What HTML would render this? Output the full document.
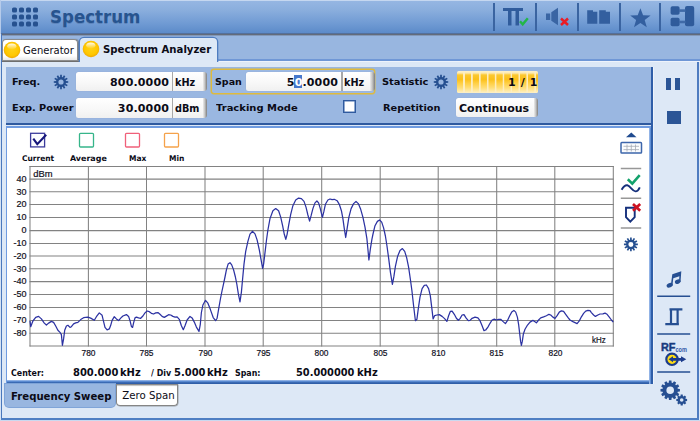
<!DOCTYPE html>
<html><head><meta charset="utf-8"><title>Spectrum</title>
<style>
html,body{margin:0;padding:0;}
body{width:700px;height:421px;overflow:hidden;position:relative;background:#98b6e0;font-family:"DejaVu Sans","Liberation Sans",sans-serif;}
.abs,#root div,#root span,#root svg{position:absolute;}
#root{position:absolute;left:0;top:0;width:700px;height:421px;overflow:hidden;}
.b{font-weight:bold;color:#0b0b16;white-space:nowrap;line-height:1;}
.r{font-weight:normal;color:#0b0b16;white-space:nowrap;line-height:1;}
.ax{font-family:"Liberation Sans",sans-serif;font-size:9px;color:#10101c;white-space:nowrap;line-height:1;-webkit-text-stroke:.2px #10101c;}
.inp{background:linear-gradient(#ffffff,#f8f8f8 55%,#f0f0f0);border-radius:2.5px;box-shadow:0 0 0 .6px rgba(150,175,215,.6);}
.cap{background:linear-gradient(90deg,#ececec,#c4c4c4 45%,#7e7e7e);border-radius:0 3px 3px 0;}
</style></head><body><div id="root">

<!-- header -->
<div style="left:0;top:0;width:700px;height:34px;background:linear-gradient(#97b7e3 0%,#8aaedd 30%,#6f9ad3 70%,#5a89c8 100%);"></div>
<div style="left:0;top:0;width:700px;height:1px;background:#c5d7f0;"></div>
<div style="left:0;top:33px;width:700px;height:1px;background:#54709c;"></div>
<div style="left:0;top:34px;width:700px;height:1px;background:#636b7a;"></div>
<div style="left:0;top:35px;width:700px;height:1px;background:#8398b8;"></div>
<div style="left:0;top:0;width:1px;height:34px;background:#b6cbea;"></div>
<!-- grid icon -->
<svg style="left:11px;top:6px" width="30" height="22" viewBox="0 0 30 22">
<g fill="#26518f">
<rect x="1" y="1.5" width="5" height="5" rx="1.600"/><rect x="8" y="1.5" width="5" height="5" rx="1.600"/><rect x="15" y="1.5" width="5" height="5" rx="1.600"/><rect x="22" y="1.5" width="5" height="5" rx="1.600"/>
<rect x="1" y="8.5" width="5" height="5" rx="1.600"/><rect x="8" y="8.5" width="5" height="5" rx="1.600"/><rect x="15" y="8.5" width="5" height="5" rx="1.600"/><rect x="22" y="8.5" width="5" height="5" rx="1.600"/>
<rect x="1" y="15.5" width="5" height="5" rx="1.600"/><rect x="8" y="15.5" width="5" height="5" rx="1.600"/><rect x="15" y="15.5" width="5" height="5" rx="1.600"/><rect x="22" y="15.5" width="5" height="5" rx="1.600"/>
</g></svg>
<span id="title" class="b" style="left:50px;top:7.5px;font-size:18px;color:#27548f;transform:scaleX(.925);transform-origin:0 0;text-shadow:0 1px 0 rgba(40,70,120,.25);">Spectrum</span>

<!-- top-right toolbar -->
<div style="left:493px;top:2.5px;width:2px;height:28px;background:#3a64a1;"></div>
<div style="left:535px;top:2.5px;width:2px;height:28px;background:#3a64a1;"></div>
<div style="left:577px;top:2.5px;width:2px;height:28px;background:#3a64a1;"></div>
<div style="left:619px;top:2.5px;width:2px;height:28px;background:#3a64a1;"></div>
<div style="left:659px;top:2.5px;width:2px;height:28px;background:#3a64a1;"></div>
<svg id="tb" style="left:496px;top:0" width="204" height="34" viewBox="496 0 204 34">
<!-- TT check -->
<g fill="#305c9c"><rect x="503" y="8" width="20" height="3"/><rect x="508" y="8" width="3.500" height="17.500"/><rect x="515.500" y="8" width="3.500" height="17.500"/></g>
<path d="M520 21.300 L522.700 24.300 L527.800 18.200" stroke="#22b648" stroke-width="2.400" fill="none"/>
<!-- speaker x -->
<g fill="#3a65a3"><rect x="546" y="13.500" width="4.200" height="6.500"/><path d="M551.300 12.300 L558 7.800 L558 25.200 L551.300 20.700 Z"/></g>
<path d="M561 18.500 L568 25 M568 18.500 L561 25" stroke="#ea1c24" stroke-width="2.500" fill="none"/>
<!-- folders -->
<g fill="#335f9f"><path d="M587.200 10.300 L593 10.300 L593 11.700 L597.300 11.700 L597.300 23.700 L587.200 23.700 Z"/><path d="M599.200 10.300 L605.800 10.300 L605.800 11.700 L610 11.700 L610 23.700 L599.200 23.700 Z"/></g>
<!-- star -->
<path fill="#335f9f" d="M640.400 8.200 L643.100 15.200 L650.600 15.500 L644.700 20.100 L646.800 27.300 L640.400 23.100 L634 27.300 L636.100 20.100 L630.200 15.500 L637.700 15.200 Z"/>
<!-- blocks -->
<g fill="#2f5b9b"><rect x="670.600" y="6.300" width="9" height="8.400" rx="1.800"/><rect x="670.600" y="17.800" width="9" height="8.400" rx="1.800"/><rect x="685" y="6" width="9.200" height="20.300" rx="2"/></g>
<g fill="#3f6aa8"><rect x="679" y="9.300" width="6.500" height="2.600"/><rect x="679" y="20.700" width="6.500" height="2.600"/></g>
</svg>

<!-- tab strip -->
<div style="left:0;top:36px;width:700px;height:26px;background:#98b6e0;"></div>
<!-- main panel light -->
<div style="left:0;top:61px;width:700px;height:360px;background:#dde8f6;"></div>
<div style="left:0;top:59.400px;width:700px;height:1.800px;background:#6f97d6;"></div><div style="left:0;top:61.100px;width:700px;height:1.300px;background:#eef3fb;"></div>
<div style="left:1px;top:34px;width:1px;height:386px;background:#4a78bc;"></div><div style="left:0;top:34px;width:1px;height:387px;background:#d5e2f4;"></div>
<div style="left:697.200px;top:62px;width:1.800px;height:358px;background:#4f7cc0;"></div>
<div style="left:1px;top:418px;width:698px;height:2px;background:#4f7fc3;"></div>
<div style="left:0;top:420px;width:700px;height:1px;background:#c9d9f0;"></div>

<!-- tab Generator -->
<div style="left:2px;top:39px;width:76px;height:22px;background:linear-gradient(#ffffff,#ffffff 75%,#e4e4e4);border-radius:4px 4px 0 0;border:1px solid #8c8c8c;border-bottom:none;box-sizing:border-box;box-shadow:1px 0 1px rgba(60,60,60,.5);"></div>
<div style="left:2px;top:60px;width:77px;height:1px;background:#8e8e8e;"></div><div style="left:2px;top:61px;width:77px;height:1px;background:#6e6e6e;"></div>
<svg style="left:2.6px;top:41px" width="18" height="18" viewBox="0 0 18 18"><defs><radialGradient id="bg1" cx="50%" cy="45%" r="55%"><stop offset="0" stop-color="#ffd21a"/><stop offset=".7" stop-color="#ffc800"/><stop offset=".9" stop-color="#f6b400"/><stop offset="1" stop-color="#e39a00"/></radialGradient><linearGradient id="hl1" x1="0" y1="0" x2="0" y2="1"><stop offset="0" stop-color="#fff" stop-opacity=".95"/><stop offset="1" stop-color="#fff" stop-opacity=".05"/></linearGradient></defs><circle cx="9" cy="9" r="8.3" fill="url(#bg1)"/><ellipse cx="8.800" cy="5.300" rx="4.600" ry="2.900" fill="url(#hl1)"/></svg>
<span id="tgen" class="r" style="left:23px;top:46px;font-size:10px;">Generator</span>
<!-- tab Spectrum Analyzer -->
<div style="left:80px;top:38px;width:137px;height:26px;background:#dde8f6;border-radius:4px 4px 0 0;box-shadow:0 0 0 1.3px #4f7dc0;"></div>
<div style="left:78px;top:62.400px;width:142px;height:4px;background:#dde8f6;"></div>
<svg style="left:81.6px;top:40px" width="18" height="18" viewBox="0 0 18 18"><defs><radialGradient id="bg2" cx="50%" cy="45%" r="55%"><stop offset="0" stop-color="#ffd21a"/><stop offset=".7" stop-color="#ffc800"/><stop offset=".9" stop-color="#f6b400"/><stop offset="1" stop-color="#e39a00"/></radialGradient><linearGradient id="hl2" x1="0" y1="0" x2="0" y2="1"><stop offset="0" stop-color="#fff" stop-opacity=".95"/><stop offset="1" stop-color="#fff" stop-opacity=".05"/></linearGradient></defs><circle cx="9" cy="9" r="8.3" fill="url(#bg2)"/><ellipse cx="8.800" cy="5.300" rx="4.600" ry="2.900" fill="url(#hl2)"/></svg>
<span id="tsa" class="b" style="left:103px;top:45px;font-size:10.15px;">Spectrum Analyzer</span>

<!-- form area -->
<div style="left:5.7px;top:66.7px;width:647.1px;height:57.9px;background:#2f5a9f;"></div>
<div style="left:5.700px;top:66.700px;width:645.400px;height:56.500px;background:#9ab7e1;"></div>
<div style="left:652.900px;top:66.700px;width:1.100px;height:317px;background:#eef3fb;"></div>
<span id="lfreq" class="b" style="left:12px;top:76.8px;font-size:9.5px;transform:scaleX(1.03);transform-origin:0 0;">Freq.</span>
<span id="lexp" class="b" style="left:12px;top:102.8px;font-size:9.5px;transform:scaleX(1.03);transform-origin:0 0;">Exp. Power</span>
<svg class="gear" style="left:53px;top:74px" width="16" height="16" viewBox="-8 -8 16 16"><use href="#gear"/></svg>
<!-- freq input -->
<div class="inp" style="left:76.3px;top:71.6px;width:126.5px;height:19.6px;border-radius:2.5px 0 0 2.5px;"></div><div style="left:172.1px;top:71.6px;width:1.2px;height:19.6px;background:#a8a8a8;"></div><div class="cap" style="left:202.79999999999998px;top:71.6px;width:4.6px;height:19.6px;"></div>
<span id="vfreq" class="b" style="right:531px;top:76.7px;font-size:11px;letter-spacing:.15px;">800.0000</span>
<span id="ufreq" class="b" style="left:175px;top:77.7px;font-size:9.7px;">kHz</span>
<!-- exp power input -->
<div class="inp" style="left:76.3px;top:98.0px;width:126.5px;height:19.6px;border-radius:2.5px 0 0 2.5px;"></div><div style="left:172.1px;top:98.0px;width:1.2px;height:19.6px;background:#a8a8a8;"></div><div class="cap" style="left:202.79999999999998px;top:98.0px;width:4.6px;height:19.6px;"></div>
<span id="vexp" class="b" style="right:531px;top:102.7px;font-size:11px;letter-spacing:.15px;">30.0000</span>
<span id="uexp" class="b" style="left:175px;top:103.7px;font-size:9.7px;">dBm</span>
<!-- span -->
<div style="left:211.200px;top:69.400px;width:162.200px;height:22.200px;border:1px solid #dfba3c;box-shadow:0 0 0 .45px #dfba3c;border-radius:3px;background:#9cb9e2;"></div>
<span id="lspan" class="b" style="left:215px;top:76.8px;font-size:9.5px;transform:scaleX(1.0);transform-origin:0 0;">Span</span>
<div class="inp" style="left:245.5px;top:71.9px;width:124.5px;height:19.6px;border-radius:2.5px 0 0 2.5px;"></div><div style="left:341.4px;top:71.9px;width:1.2px;height:19.6px;background:#a8a8a8;"></div><div class="cap" style="left:370.0px;top:71.9px;width:4.6px;height:19.6px;"></div>
<div style="left:294px;top:75.200px;width:8px;height:13px;background:#4678cc;"></div>
<span id="vspan" class="b" style="right:362px;top:76.7px;font-size:11px;letter-spacing:.15px;">5<span style="position:static;color:#fff">0</span>.0000</span>
<span id="uspan" class="b" style="left:344px;top:77.7px;font-size:9.7px;">kHz</span>
<span id="ltrack" class="b" style="left:216px;top:102.8px;font-size:9.5px;transform:scaleX(1.05);transform-origin:0 0;">Tracking Mode</span>
<div style="left:343px;top:100.400px;width:11px;height:10.700px;border:1px solid #2f5a9f;background:#fff;box-shadow:inset 0 0 0 .6px #4a72b0;"></div>
<!-- statistic -->
<span id="lstat" class="b" style="left:382px;top:76.8px;font-size:9.5px;transform:scaleX(1.04);transform-origin:0 0;">Statistic</span>
<svg class="gear" style="left:433px;top:74px" width="16" height="16" viewBox="-8 -8 16 16"><use href="#gear"/></svg>
<div id="prog" style="left:457px;top:70.800px;width:80.500px;height:22.200px;border-radius:1.500px;background:
 repeating-linear-gradient(90deg,rgba(253,238,196,0) 0,rgba(253,238,196,0) 5.700px,rgba(253,238,196,.95) 6.300px,rgba(253,238,196,.95) 7.500px,rgba(253,238,196,0) 7.930px),
 linear-gradient(#fdf2cc 0%,#fdeab0 9%,#fbc830 18%,#fbc01a 38%,#ffcf44 55%,#ffdd74 75%,#ffe9a4 90%,#fdf0c8 100%);"></div>
<span id="vstat" class="b" style="left:508px;top:76.700px;font-size:11px;word-spacing:1px;letter-spacing:.100px;">1 / 1</span>
<span id="lrep" class="b" style="left:382.5px;top:102.8px;font-size:9.5px;transform:scaleX(1.03);transform-origin:0 0;">Repetition</span>
<div class="inp" style="left:455.6px;top:98px;width:78px;height:19px;border-radius:2.5px 0 0 2.5px;"></div><div class="cap" style="left:533.6px;top:98px;width:4.6px;height:19px;"></div>
<span id="vrep" class="b" style="left:459px;top:102.5px;font-size:11px;">Continuous</span>

<!-- chart panel -->
<div style="left:5.7px;top:126px;width:647.3px;height:257.7px;background:#6f9be0;"></div>
<div style="left:7px;top:380px;width:646px;height:3.7px;background:linear-gradient(#a9c4ee,#5d8dd4 35%,#2f5ea8 72%,#2f5ea8);border-radius:0 0 3px 0;"></div>
<div style="left:649.400px;top:127.700px;width:3.600px;height:256px;background:linear-gradient(90deg,#a9c4ee,#5d8dd4 40%,#2f5ea8 55%,#2f5ea8);"></div><div style="left:650.900px;top:66.700px;width:2px;height:62px;background:#2f5ea8;"></div>
<div style="left:7px;top:127.7px;width:642.4px;height:252.3px;background:#fff;"></div>

<!-- legend -->
<svg style="left:0;top:0" width="700" height="421" viewBox="0 0 700 421">
<defs>
<g id="gear"><path fill="#254f90" fill-rule="evenodd" d="M4.92 -0.90 L7.25 -0.85 L7.25 0.85 L4.92 0.90 L4.71 1.68 L6.71 2.89 L5.85 4.36 L3.81 3.24 L3.24 3.81 L4.36 5.85 L2.89 6.71 L1.68 4.71 L0.90 4.92 L0.85 7.25 L-0.85 7.25 L-0.90 4.92 L-1.68 4.71 L-2.89 6.71 L-4.36 5.85 L-3.24 3.81 L-3.81 3.24 L-5.85 4.36 L-6.71 2.89 L-4.71 1.68 L-4.92 0.90 L-7.25 0.85 L-7.25 -0.85 L-4.92 -0.90 L-4.71 -1.68 L-6.71 -2.89 L-5.85 -4.36 L-3.81 -3.24 L-3.24 -3.81 L-4.36 -5.85 L-2.89 -6.71 L-1.68 -4.71 L-0.90 -4.92 L-0.85 -7.25 L0.85 -7.25 L0.90 -4.92 L1.68 -4.71 L2.89 -6.71 L4.36 -5.85 L3.24 -3.81 L3.81 -3.24 L5.85 -4.36 L6.71 -2.89 L4.71 -1.68 Z M2.60 0.00 A2.6 2.6 0 1 0 -2.60 0.00 A2.6 2.6 0 1 0 2.60 0.00 Z"/></g>
</defs>
<rect x="30.600" y="133.300" width="14" height="13.600" fill="#fbfcff" stroke="#3b3b9c" stroke-width="1.300"/>
<path d="M33.300 138.600 L37.300 144.200 L46.200 134.800" stroke="#15157a" stroke-width="2.100" fill="none"/>
<rect x="79.500" y="133.300" width="14" height="13.700" fill="#fff" stroke="#36b58a" stroke-width="1.3" rx="1"/>
<rect x="125.500" y="133.300" width="14" height="13.700" fill="#fff" stroke="#f0607a" stroke-width="1.3" rx="1"/>
<rect x="164.500" y="133.300" width="14" height="13.700" fill="#fff" stroke="#f5a24a" stroke-width="1.3" rx="1"/>
<!-- grid -->
<g stroke="#828282" stroke-width="1.050">
<path d="M29.5 166.5H613.8"/>
<path d="M29.5 179.1H613.8"/>
<path d="M29.5 191.7H613.8"/>
<path d="M29.5 204.5H613.8"/>
<path d="M29.5 217.5H613.8"/>
<path d="M29.5 230.6H613.8"/>
<path d="M29.5 243.4H613.8"/>
<path d="M29.5 256.0H613.8"/>
<path d="M29.5 268.8H613.8"/>
<path d="M29.5 281.6H613.8"/>
<path d="M29.5 294.4H613.8"/>
<path d="M29.5 307.4H613.8"/>
<path d="M29.5 320.5H613.8"/>
<path d="M29.5 333.2H613.8"/>
<path d="M29.5 345.9H613.8"/>
<path d="M30.0 166.0V346.4"/>
<path d="M88.4 166.0V346.4"/>
<path d="M146.5 166.0V346.4"/>
<path d="M205.0 166.0V346.4"/>
<path d="M263.2 166.0V346.4"/>
<path d="M321.7 166.0V346.4"/>
<path d="M380.2 166.0V346.4"/>
<path d="M438.2 166.0V346.4"/>
<path d="M496.7 166.0V346.4"/>
<path d="M554.8 166.0V346.4"/>
<path d="M613.3 166.0V346.4"/>
</g>
<path d="M30.0,321.0 L30.7,326.7 L32.9,321.0 L35.7,317.4 L38.6,316.4 L41.4,318.9 L44.3,323.1 L46.4,325.0 L48.6,323.1 L51.4,321.4 L53.6,322.4 L55.7,326.0 L57.9,330.3 L60.0,332.4 L61.4,334.6 L62.4,345.3 L63.6,338.9 L64.7,330.3 L66.4,326.0 L67.9,325.3 L70.0,327.4 L71.4,326.7 L73.6,323.9 L75.7,322.9 L77.9,322.4 L80.7,319.6 L83.6,317.7 L87.9,317.1 L90.7,318.1 L94.3,320.3 L96.4,316.7 L99.3,312.9 L102.1,315.3 L103.6,321.7 L105.0,327.4 L107.1,329.9 L109.3,328.9 L110.7,325.3 L112.1,320.3 L114.3,316.7 L116.4,318.9 L118.6,320.6 L120.7,318.1 L122.9,316.0 L126.4,314.6 L128.6,316.4 L130.0,320.7 L131.4,326.4 L132.6,327.4 L133.6,322.9 L135.0,317.9 L136.4,317.1 L138.6,317.9 L140.7,318.3 L142.9,316.0 L145.0,312.9 L147.1,311.0 L149.3,311.7 L151.4,313.3 L153.6,314.0 L155.7,312.9 L157.9,312.6 L160.0,314.3 L162.1,316.4 L164.3,317.4 L166.4,316.1 L168.6,314.7 L170.7,315.0 L172.9,316.4 L175.0,317.1 L177.1,316.9 L179.3,319.3 L181.4,325.7 L183.3,329.7 L185.0,325.7 L187.1,320.0 L190.0,316.4 L192.1,317.9 L194.3,322.1 L196.4,327.1 L199.0,331.4 L200.3,324.3 L201.4,312.5 L202.9,305.0 L205.5,300.3 L207.9,303.2 L210.4,309.6 L213.2,317.5 L215.6,320.7 L217.1,318.2 L218.8,308.2 L220.5,298.5 L222.0,291.0 L223.6,283.6 L225.0,277.0 L226.4,269.9 L228.1,264.1 L230.0,262.7 L231.7,264.9 L233.6,269.9 L235.4,277.0 L236.8,284.0 L238.3,293.6 L240.0,301.9 L241.4,292.1 L242.6,279.0 L244.0,264.1 L245.7,251.3 L247.9,241.3 L250.0,234.1 L252.6,231.3 L255.0,233.9 L257.1,239.9 L259.3,249.9 L261.1,259.9 L262.6,268.4 L263.6,264.1 L265.0,252.7 L266.5,240.0 L267.9,230.0 L270.0,218.6 L272.9,210.7 L275.7,208.6 L278.6,210.7 L280.7,217.1 L282.6,225.7 L284.3,234.3 L285.8,239.3 L287.1,234.3 L288.6,225.7 L290.7,214.3 L292.9,205.7 L295.7,200.0 L298.6,198.1 L301.4,198.6 L304.0,201.4 L306.0,207.1 L307.9,215.0 L309.6,221.1 L311.1,215.7 L312.9,208.6 L315.0,202.9 L316.9,201.0 L318.6,202.9 L320.3,208.6 L322.4,217.4 L323.9,211.4 L325.4,204.3 L327.9,200.0 L330.0,199.0 L332.1,199.7 L334.3,199.3 L337.1,200.7 L339.3,204.3 L341.4,210.7 L342.9,218.6 L344.3,228.6 L345.7,237.5 L347.1,228.6 L348.9,217.1 L351.1,208.6 L353.6,203.6 L356.0,201.5 L358.3,203.6 L360.7,209.3 L362.9,217.1 L365.0,227.1 L366.9,238.6 L367.8,248.0 L368.9,260.0 L370.3,249.3 L371.9,239.3 L373.0,234.0 L375.0,225.7 L377.4,221.4 L379.6,220.0 L381.7,222.1 L383.6,227.9 L385.4,236.0 L386.9,245.5 L388.6,257.9 L390.4,272.1 L392.4,284.3 L393.9,276.4 L395.4,266.4 L397.6,256.4 L400.0,250.4 L402.4,248.6 L404.7,251.4 L406.7,257.9 L408.6,267.1 L410.4,279.5 L411.9,290.5 L413.6,305.7 L415.4,320.7 L416.9,319.3 L418.3,308.6 L420.0,297.1 L422.1,288.6 L424.3,285.4 L426.4,285.0 L428.6,288.6 L430.3,295.7 L431.7,307.1 L433.1,318.9 L434.6,315.7 L436.9,315.0 L439.3,314.6 L442.1,316.4 L444.6,318.6 L446.9,321.4 L448.6,315.7 L450.3,311.4 L452.1,311.1 L454.3,314.3 L456.4,318.3 L458.3,320.3 L460.0,318.6 L462.1,315.0 L464.0,314.6 L466.0,317.9 L468.3,320.7 L470.0,320.4 L472.1,318.3 L475.0,317.1 L477.9,317.9 L480.0,320.7 L482.1,325.7 L484.0,330.7 L485.7,330.0 L487.9,327.1 L490.0,323.3 L492.1,320.0 L494.3,319.1 L496.4,320.0 L498.6,319.3 L500.7,319.3 L502.9,321.4 L505.4,323.6 L507.4,320.7 L509.7,315.7 L511.7,312.1 L513.9,310.4 L515.7,312.1 L517.4,317.1 L518.6,324.3 L519.6,332.9 L520.6,341.4 L521.4,345.4 L522.3,341.4 L523.3,334.3 L525.0,329.3 L527.1,325.7 L530.0,322.1 L532.9,320.4 L535.0,321.7 L536.4,322.9 L538.6,320.0 L540.7,317.9 L543.6,316.9 L546.4,315.7 L548.9,314.3 L550.7,315.0 L552.9,317.1 L555.0,318.4 L557.1,315.7 L559.3,312.1 L561.4,310.8 L563.6,311.4 L565.7,314.3 L567.9,317.4 L570.0,320.0 L572.9,321.6 L575.0,322.6 L577.1,323.6 L579.3,320.9 L581.4,316.8 L583.6,313.4 L585.7,311.1 L587.9,310.3 L590.0,310.6 L591.4,312.6 L593.6,315.0 L595.4,316.4 L597.9,315.0 L600.0,314.0 L602.9,313.9 L605.0,313.1 L607.1,314.3 L609.3,317.1 L611.4,320.0 L613.3,322.1" fill="none" stroke="#2c32a2" stroke-width="1.250" stroke-linejoin="round"/>
</svg>
<span class="b" id="lcur" style="left:22px;top:154.7px;font-size:7.8px;transform:scaleX(.96);transform-origin:0 0;">Current</span>
<span class="b" id="lavg" style="left:70px;top:154.7px;font-size:7.8px;transform:scaleX(1.02);transform-origin:0 0;">Average</span>
<span class="b" id="lmax" style="left:129px;top:154.7px;font-size:7.8px;transform:scaleX(.96);transform-origin:0 0;">Max</span>
<span class="b" id="lmin" style="left:169.2px;top:154.7px;font-size:7.8px;transform:scaleX(.96);transform-origin:0 0;">Min</span>
<span class="ax" style="left:33.300px;top:169.200px;font-size:9.400px;">dBm</span>
<span class="ax" style="left:591.5px;top:336.3px;font-size:8.5px;transform:scaleX(.93);transform-origin:0 0;">kHz</span>
<span class="ax yl" style="right:673.5px;top:174.9px;">40</span>
<span class="ax yl" style="right:673.5px;top:187.5px;">30</span>
<span class="ax yl" style="right:673.5px;top:200.3px;">20</span>
<span class="ax yl" style="right:673.5px;top:213.3px;">10</span>
<span class="ax yl" style="right:673.5px;top:226.4px;">0</span>
<span class="ax yl" style="right:673.5px;top:239.2px;">-10</span>
<span class="ax yl" style="right:673.5px;top:251.8px;">-20</span>
<span class="ax yl" style="right:673.5px;top:264.6px;">-30</span>
<span class="ax yl" style="right:673.5px;top:277.4px;">-40</span>
<span class="ax yl" style="right:673.5px;top:290.2px;">-50</span>
<span class="ax yl" style="right:673.5px;top:303.2px;">-60</span>
<span class="ax yl" style="right:673.5px;top:316.3px;">-70</span>
<span class="ax yl" style="right:673.5px;top:329.0px;">-80</span>
<span class="ax xl" style="left:81.1px;top:349px;transform:scaleX(.93);transform-origin:50% 0;">780</span>
<span class="ax xl" style="left:139.2px;top:349px;transform:scaleX(.93);transform-origin:50% 0;">785</span>
<span class="ax xl" style="left:197.7px;top:349px;transform:scaleX(.93);transform-origin:50% 0;">790</span>
<span class="ax xl" style="left:255.9px;top:349px;transform:scaleX(.93);transform-origin:50% 0;">795</span>
<span class="ax xl" style="left:314.4px;top:349px;transform:scaleX(.93);transform-origin:50% 0;">800</span>
<span class="ax xl" style="left:372.9px;top:349px;transform:scaleX(.93);transform-origin:50% 0;">805</span>
<span class="ax xl" style="left:430.9px;top:349px;transform:scaleX(.93);transform-origin:50% 0;">810</span>
<span class="ax xl" style="left:489.4px;top:349px;transform:scaleX(.93);transform-origin:50% 0;">815</span>
<span class="ax xl" style="left:547.5px;top:349px;transform:scaleX(.93);transform-origin:50% 0;">820</span>

<!-- bottom info -->
<span class="b" id="bcenter" style="left:11px;top:368.6px;font-size:8.5px;transform:scaleX(.93);transform-origin:0 0;">Center:</span>
<span class="b" id="bcv" style="left:73px;top:366.5px;font-size:11px;transform:scaleX(.905);transform-origin:0 0;">800.000</span>
<span class="b" id="bcu" style="left:120px;top:366.5px;font-size:11px;transform:scaleX(.905);transform-origin:0 0;">kHz</span>
<span class="b" id="bdiv" style="left:151px;top:368.6px;font-size:8.5px;transform:scaleX(.93);transform-origin:0 0;">/ Div</span>
<span class="b" id="bdv" style="left:174px;top:366.5px;font-size:11px;transform:scaleX(.905);transform-origin:0 0;">5.000</span>
<span class="b" id="bdu" style="left:207px;top:366.5px;font-size:11px;transform:scaleX(.905);transform-origin:0 0;">kHz</span>
<span class="b" id="bspan" style="left:235px;top:368.6px;font-size:8.5px;transform:scaleX(.93);transform-origin:0 0;">Span:</span>
<span class="b" id="bsv" style="left:296px;top:366.5px;font-size:11px;transform:scaleX(.893);transform-origin:0 0;">50.000000</span>
<span class="b" id="bsu" style="left:356.5px;top:366.5px;font-size:11px;transform:scaleX(.905);transform-origin:0 0;">kHz</span>

<!-- bottom tabs -->
<div style="left:5px;top:383.500px;width:110px;height:23.700px;background:#98b6e0;border-radius:0 0 4px 4px;box-shadow:0 0 0 1px #7fa4d8;"></div>
<span class="b" id="tfs" style="left:11px;top:392px;font-size:10.15px;">Frequency Sweep</span>
<div style="left:116.200px;top:384px;width:62.300px;height:22px;background:linear-gradient(#6a6a6a 0,#b8b8b8 1.200px,#fff 2.600px);border-radius:0 0 4px 4px;border:1px solid #858585;border-top:none;box-sizing:border-box;box-shadow:.5px .5px 0 rgba(90,90,90,.5);"></div>
<span class="r" id="tzs" style="left:122.300px;top:391.200px;font-size:10.200px;">Zero Span</span>

<!-- right chart icons -->
<svg style="left:610px;top:125px" width="42" height="140" viewBox="610 125 42 140">
<path d="M631.3 132.500 L636.500 137.300 L626 137.300 Z" fill="#1f4a8f"/>
<rect x="621" y="142.600" width="20.500" height="10.400" rx=".8" fill="#fbfcfe" stroke="#3d66ab" stroke-width="1.500"/>
<g stroke="#a4a9b4" stroke-width="0.800"><path d="M623.500 146.300h15.500M623.500 149.600h15.500M627 144.500v7M631.300 144.500v7M635.500 144.500v7"/></g>
<g stroke="#979797" stroke-width="1.500"><path d="M620.800 168.500h20.400M620.800 198.300h20.400M620.800 228.100h20.400"/></g>
<path d="M627.800 179.300 L632.300 183.600 L639.700 175.200" stroke="#14a26c" stroke-width="2.600" fill="none"/>
<path d="M621.600 189.700 C623.500 186.500 625.500 185 627.300 185.300 C630.200 185.800 632.500 191.200 635.500 191.400 C637.300 191.500 638.800 189.600 639.800 187.400" stroke="#15307c" stroke-width="1.900" fill="none"/>
<path d="M626 207.700 H634.700 V217.200 L630.300 221.700 L626 217.200 Z" fill="#fff" stroke="#15307c" stroke-width="1.900"/>
<path d="M633 204 L640.200 210.700 M640.200 204 L633 210.700" stroke="#cc1222" stroke-width="2.700"/>
<g transform="translate(630.900 244.400) scale(.96)"><use href="#gear"/></g>
</svg>

<!-- sidebar icons -->
<svg style="left:654px;top:62px" width="44" height="356" viewBox="654 62 44 356">
<g fill="#2b5596">
<rect x="666" y="78" width="5" height="12"/><rect x="675" y="78" width="5" height="12"/>
<rect x="667" y="111" width="14" height="13"/>
</g>
<g stroke="#264f92" stroke-width="1.500"><path d="M657.200 296.200h33M657.200 334.100h33M657.200 372h33"/></g>
<g fill="#264f92" stroke="none"><ellipse cx="669.700" cy="285.300" rx="3.200" ry="2.200" transform="rotate(-22 669.700 285.300)"/><ellipse cx="677.700" cy="281.700" rx="2.900" ry="2.100" transform="rotate(-22 677.700 281.700)"/><path d="M672.300 274.300 L681.300 271.200 L680.500 282 L678.900 282 L679.400 276.300 L673.300 278.300 L672.400 285.500 L670.800 285.500 Z"/></g>
<path d="M665.300 324.200 H678.900 M669.500 309.400 H682.400 M671 309.400 V324.200 M677.600 309.400 V325.200" stroke="#264f92" stroke-width="2.200" fill="none"/>
<text x="661" y="351" font-family="Liberation Sans,sans-serif" font-weight="bold" font-size="10.800" fill="#173a7e" stroke="#173a7e" stroke-width=".45">RF</text>
<text x="675.500" y="351.800" font-family="Liberation Sans,sans-serif" font-weight="bold" font-size="7.500" fill="#3158a8" textLength="11.500" lengthAdjust="spacingAndGlyphs">com</text>
<circle cx="672" cy="359.300" r="5.700" fill="#ffdc14" stroke="#1c3c8c" stroke-width="2.200"/>
<path d="M671.500 357.900 H681 V356.300 L686.300 359.300 L681 362.300 V360.700 H671.500 Z" fill="#1c3c8c"/><path d="M668.600 359.300 L673 356.300 L673 362.300 Z" fill="#1c3c8c"/>
<path fill="#264f92" fill-rule="evenodd" d="M668.71 382.65 L668.97 380.48 L671.43 380.48 L671.69 382.65 L672.69 382.91 L674.00 381.17 L676.13 382.39 L675.27 384.40 L676.00 385.13 L678.01 384.27 L679.23 386.40 L677.49 387.71 L677.75 388.71 L679.92 388.97 L679.92 391.43 L677.75 391.69 L677.49 392.69 L679.23 394.00 L678.01 396.13 L676.00 395.27 L675.27 396.00 L676.13 398.01 L674.00 399.23 L672.69 397.49 L671.69 397.75 L671.43 399.92 L668.97 399.92 L668.71 397.75 L667.71 397.49 L666.40 399.23 L664.27 398.01 L665.13 396.00 L664.40 395.27 L662.39 396.13 L661.17 394.00 L662.91 392.69 L662.65 391.69 L660.48 391.43 L660.48 388.97 L662.65 388.71 L662.91 387.71 L661.17 386.40 L662.39 384.27 L664.40 385.13 L665.13 384.40 L664.27 382.39 L666.40 381.17 L667.71 382.91 Z M674.00 390.20 A3.8 3.8 0 1 0 666.40 390.20 A3.8 3.8 0 1 0 674.00 390.20 Z"/>
<path fill="#264f92" fill-rule="evenodd" d="M680.52 396.07 L680.67 394.60 L682.73 394.60 L682.88 396.07 L683.64 396.39 L684.79 395.45 L686.25 396.91 L685.31 398.06 L685.63 398.82 L687.10 398.97 L687.10 401.03 L685.63 401.18 L685.31 401.94 L686.25 403.09 L684.79 404.55 L683.64 403.61 L682.88 403.93 L682.73 405.40 L680.67 405.40 L680.52 403.93 L679.76 403.61 L678.61 404.55 L677.15 403.09 L678.09 401.94 L677.77 401.18 L676.30 401.03 L676.30 398.97 L677.77 398.82 L678.09 398.06 L677.15 396.91 L678.61 395.45 L679.76 396.39 Z M683.50 400.00 A1.8 1.8 0 1 0 679.90 400.00 A1.8 1.8 0 1 0 683.50 400.00 Z"/>
</svg>

</div></body></html>
